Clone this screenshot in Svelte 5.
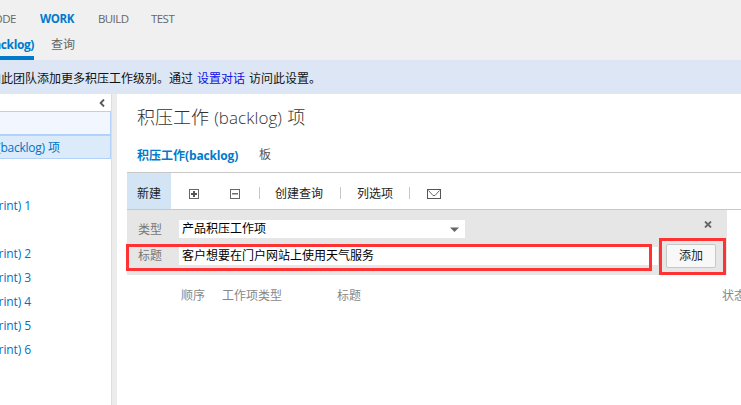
<script>
  const sprints = [1, null, 2, 3, 4, 5, 6];
</script>

<div class="app">
  <header>
    <nav class="hubs">
      <span class="code">CODE</span>
      <b>WORK</b>
      <span class="build">BUILD</span>
      <span class="test">TEST</span>
    </nav>
    <nav class="groups">
      <div class="current"><span>积压工作(backlog)</span></div>
      <span class="query">查询</span>
    </nav>
  </header>

  <div class="notice">
    <div class="lead">向此团队添加更多积压工作级别。通过</div>
    <a href="#settings">设置对话</a>
    <span>访问此设置。</span>
  </div>

  <div class="body">
    <aside>
      <div class="collapse">
        <svg width="6" height="8" viewBox="0 0 6 8"><path d="M5 .5 1.6 4 5 7.5" fill="none" stroke="#555" stroke-width="1.8" /></svg>
      </div>
      <div class="row box"></div>
      <div class="row box selected"><span class="end">积压工作<i>(backlog)</i> 项</span></div>
      <div class="space"></div>
      {#each sprints as n}
        <div class="row">{#if n}<span class="sprint">冲刺(sprint) {n}</span>{/if}</div>
      {/each}
    </aside>
    <div class="splitter"></div>

    <main>
      <h1>积压工作 <span>(backlog)</span> 项</h1>
      <div class="tabs">
        <b>积压工作<span>(backlog)</span></b>
        <span class="board">板</span>
      </div>

      <div class="toolbar">
        <div class="new">新建</div>
        <svg class="plus" width="10" height="10" viewBox="0 0 10 10"><rect x=".5" y=".5" width="9" height="9" fill="none" stroke="#666" /><path d="M2 5h6M5 2v6" stroke="#555" stroke-width="2" /></svg>
        <svg class="minus" width="10" height="10" viewBox="0 0 10 10"><rect x=".5" y=".5" width="9" height="9" fill="none" stroke="#666" /><path d="M2 4.8h6" stroke="#555" stroke-width="1.3" /></svg>
        <i class="sep s1"></i>
        <span class="create">创建查询</span>
        <i class="sep s2"></i>
        <span class="columns">列选项</span>
        <i class="sep s3"></i>
        <svg class="mail" width="14" height="10" viewBox="0 0 14 10"><rect x=".5" y=".5" width="13" height="9" fill="#fff" stroke="#555" /><path d="M1.5 1.5 6 6.5h2l4.5-5" fill="none" stroke="#666" /></svg>
      </div>

      <div class="form">
        <div class="field type">
          <label for="kind">类型</label>
          <div id="kind" class="select"><span>产品积压工作项</span>
            <svg width="9" height="5" viewBox="0 0 9 5"><path d="M0 .5h9L4.5 5z" fill="#666" /></svg>
          </div>
          <svg class="close" width="8" height="7" viewBox="0 0 8 7"><path d="M1 .5 7 6.5M7 .5 1 6.5" stroke="#666" stroke-width="1.8" /></svg>
        </div>
        <div class="field title">
          <label for="name">标题</label>
          <div id="name" class="input">客户想要在门户网站上使用天气服务</div>
          <button>添加</button>
        </div>
        <div class="mark wide"></div>
        <div class="mark small"></div>
      </div>

      <div class="head">
        <span class="order">顺序</span>
        <span class="kind">工作项类型</span>
        <span class="name">标题</span>
        <span class="state">状态</span>
      </div>
    </main>
  </div>
</div>

<style>
  :global(body) { overflow: hidden; background: #fff; }
  .app {
    width: 741px; height: 405px; overflow: hidden; background: #fff; color: #222;
    font: 12px/18px "Open Sans", "Noto Sans CJK SC", sans-serif;
    display: flex; flex-direction: column; white-space: nowrap;
  }
  .app * { box-sizing: border-box; }
  svg { display: block; flex: none; }
  header { height: 60px; flex: none; background: #f0f0f0; color: #666; }
  .hubs { display: flex; height: 33px; padding-top: 10px; font-size: 11.5px; }
  .hubs > * { flex: none; }
  .code { width: 16px; display: flex; justify-content: flex-end; letter-spacing: -.5px; }
  .hubs b { margin-left: 24px; width: 34px; color: #007acc; letter-spacing: -.4px; }
  .build { margin-left: 24px; width: 29px; letter-spacing: -.6px; }
  .test { margin-left: 24px; letter-spacing: -.55px; }
  .groups { display: flex; height: 27px; }
  .current {
    width: 34px; height: 27px; padding-top: 3px; border-bottom: 4px solid #007acc;
    display: flex; justify-content: flex-end; color: #007acc; font-weight: 700; letter-spacing: -.4px;
  }
  .query { margin: 3px 0 0 17px; }
  .notice { height: 34px; flex: none; background: #dce6f4; display: flex; align-items: center; padding-top: 4px; color: #111; }
  .lead { width: 193px; flex: none; display: flex; justify-content: flex-end; }
  .notice a { color: #1010e8; text-decoration: none; margin: 0 4px; }
  .body { flex: 1; display: flex; min-height: 0; }
  aside { width: 111px; flex: none; color: #0072c6; overflow: hidden; }
  .collapse { height: 17px; display: flex; justify-content: flex-end; padding: 5px 6px 0 0; }
  .row { height: 24px; display: flex; align-items: center; }
  .box { background: #f1f6ff; border: 1px solid #b2d2fb; border-left: 0; }
  .selected { background: #dcebfa; padding-top: 2px; }
  .end { width: 60px; flex: none; display: flex; justify-content: flex-end; white-space: pre; }
  .end i { font-style: normal; letter-spacing: -.25px; }
  .sprint { width: 31px; flex: none; display: flex; justify-content: flex-end; letter-spacing: -.1px; white-space: pre; }
  .space { height: 35px; }
  .splitter { width: 6px; flex: none; background: #ececec; border-left: 1px solid #ddd; }
  main { flex: 1; min-width: 0; padding-left: 10px; }
  h1 { margin: 0; height: 48px; padding: 10px 0 0 10px; font-weight: 300; font-size: 18px; line-height: 26px; color: #333; }
  h1 span { font-size: 17px; letter-spacing: .05px; margin: 0 .5px; }
  .tabs { display: flex; height: 30px; padding: 5px 0 0 10px; }
  .tabs b { width: 122px; color: #007acc; }
  .tabs b span { letter-spacing: -.15px; }
  .board { color: #555; margin-top: -1px; }
  .toolbar { height: 38px; border: solid #c8c8c8; border-width: 1px 0; display: flex; align-items: center; }
  .toolbar > * { flex: none; }
  .new { width: 44px; height: 36px; padding: 12px 0 0 10px; background: #d3e5f5; }
  .plus { margin: 6px 0 0 18px; }
  .minus { margin: 6px 0 0 31px; }
  .sep { width: 1px; height: 12px; background: #c8c8c8; margin-top: 4px; }
  .s1 { margin-left: 19px; }
  .create, .columns { margin: 6px 0 0 16px; }
  .create { margin-left: 15px; width: 49px; }
  .s2 { margin-left: 16px; }
  .s3 { margin-left: 16px; }
  .mail { margin: 6px 0 0 17px; }
  .form { position: relative; width: 600px; height: 65px; background: #e6e6e6; padding-top: 10px; }
  .field { display: flex; height: 26px; padding-left: 11px; color: #777; }
  .field label { width: 41px; flex: none; padding-top: 1px; }
  .select, .input { height: 18px; line-height: 20px; background: #fff; color: #000; padding-left: 3px; }
  .select { width: 286px; display: flex; justify-content: space-between; align-items: center; padding-right: 6px; }
  .close { margin: 1px 0 0 239px; }
  .title { height: 27px; padding-top: 1px; }
  .input { width: 479px; }
  .title label { padding-top: 0; }
  .input { line-height: 18px; }
  .title button {
    width: 50px; height: 24px; margin: -3px 0 0 8px; padding: 0; border: 1px solid #c8c8c8; border-radius: 2px;
    background: #f8f8f8; color: #222; font: inherit; line-height: 20px;
  }
  .mark { position: absolute; border: 3px solid #ff3333; }
  .wide { left: -1px; top: 34px; width: 526px; height: 27px; }
  .small { left: 532px; top: 28px; width: 67px; height: 37px; }
  .head { display: flex; padding: 12px 0 0 54px; color: #888; }
  .head > * { flex: none; }
  .order { width: 41px; }
  .kind { width: 115px; }
  .name { width: 385px; }
</style>
